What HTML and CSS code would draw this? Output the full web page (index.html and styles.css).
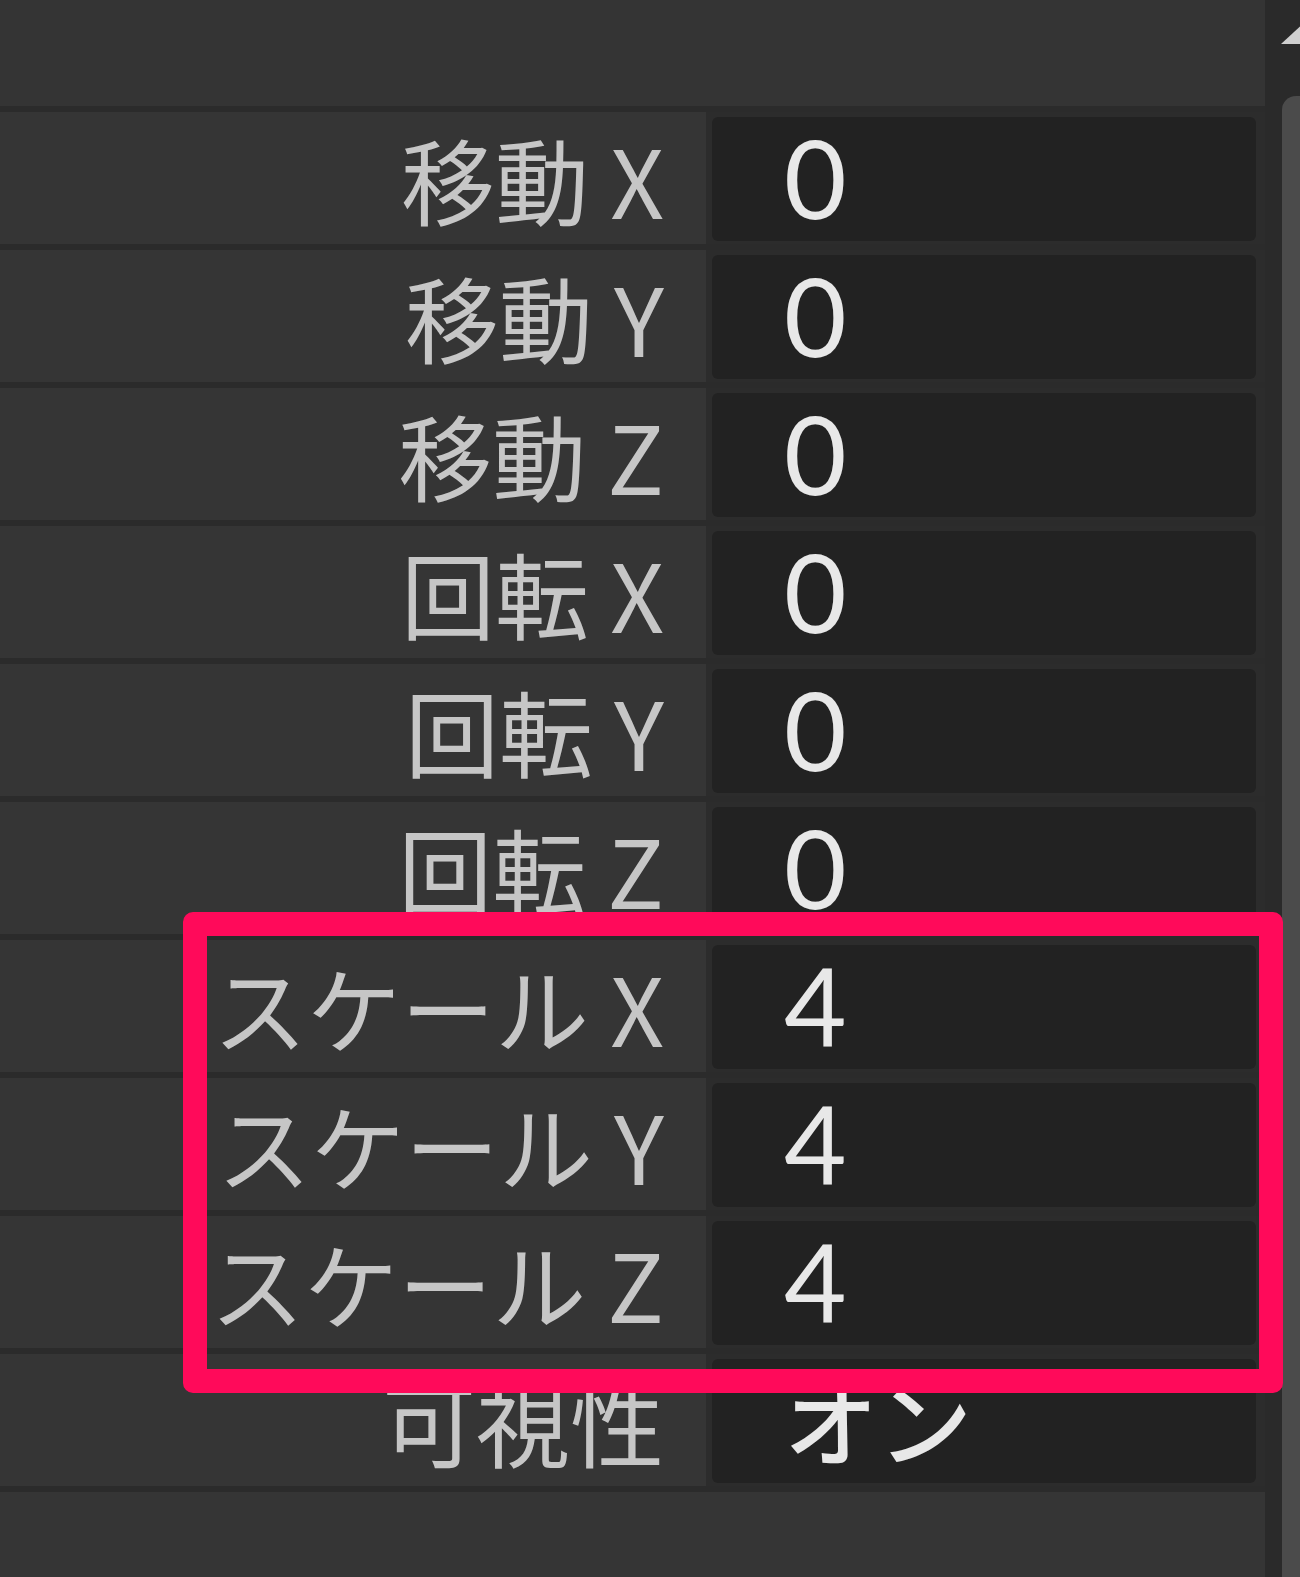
FILE: index.html
```html
<!DOCTYPE html>
<html lang="ja">
<head>
<meta charset="utf-8">
<title>Properties</title>
<link rel="stylesheet" href="styles.css">
</head>
<body>
<div class="app">
  <div class="panel">
    <div class="header"></div>
    <div class="list">
      <div class="row"><div class="label">移動 X</div><div class="value">0</div></div>
      <div class="row"><div class="label">移動 Y</div><div class="value">0</div></div>
      <div class="row"><div class="label">移動 Z</div><div class="value">0</div></div>
      <div class="row"><div class="label">回転 X</div><div class="value">0</div></div>
      <div class="row"><div class="label">回転 Y</div><div class="value">0</div></div>
      <div class="row"><div class="label">回転 Z</div><div class="value">0</div></div>
      <div class="row"><div class="label">スケール X</div><div class="value">4</div></div>
      <div class="row"><div class="label">スケール Y</div><div class="value">4</div></div>
      <div class="row"><div class="label">スケール Z</div><div class="value">4</div></div>
      <div class="row"><div class="label">可視性</div><div class="value value-jp">オン</div></div>
    </div>
    <div class="footer"></div>
  </div>
  <div class="scrollbar">
    <svg class="arrow" width="35" height="60" viewBox="0 0 35 60"><polygon points="16,44 40,22 40,44" fill="#cfcfcf"/></svg>
    <div class="thumb"></div>
  </div>
  <div class="highlight"></div>
</div>
</body>
</html>
```
FILE: styles.css
```css
html, body {
  margin: 0;
  padding: 0;
  background: #333333;
}
body {
  width: 1300px;
  height: 1577px;
  overflow: hidden;
  font-family: "Noto Sans CJK JP", "Noto Sans", sans-serif;
}
.app {
  position: relative;
  display: flex;
  width: 1300px;
  height: 1577px;
}
.panel {
  flex: 1;
  display: flex;
  flex-direction: column;
  background: #2c2c2c;
}
.header {
  height: 106px;
  background: #343434;
}
.list {
  border-top: 6px solid #2b2b2b;
}
.row {
  display: flex;
  height: 132px;
  border-bottom: 6px solid #2b2b2b;
}
.label {
  width: 664px;
  padding-right: 42px;
  background: #353535;
  color: #c6c6c6;
  font-size: 94px;
  line-height: 132px;
  text-align: right;
  white-space: nowrap;
}
.value {
  width: 472px;
  margin: 5px 0 3px 6px;
  padding-left: 72px;
  background: #222222;
  border-radius: 6px;
  color: #e8e8e8;
  font-family: Lato, "Noto Sans CJK JP", sans-serif;
  font-size: 108px;
  line-height: 120px;
  white-space: nowrap;
}
.value-jp {
  font-family: "Noto Sans CJK JP", sans-serif;
  font-size: 94px;
  font-weight: 500;
}
.footer {
  flex: 1;
  background: #353535;
}
.scrollbar {
  width: 35px;
  background: #2a2a2a;
  position: relative;
  display: flex;
  flex-direction: column;
}
.arrow {
  display: block;
  height: 60px;
}
.thumb {
  margin-top: 36px;
  margin-left: 17px;
  flex: 1;
  background: #4b4b4b;
  border-radius: 14px 0 0 0;
}
.highlight {
  position: absolute;
  left: 183px;
  top: 912px;
  width: 1052px;
  height: 433px;
  border: 24px solid #ff0a5a;
  border-radius: 10px;
}
```
